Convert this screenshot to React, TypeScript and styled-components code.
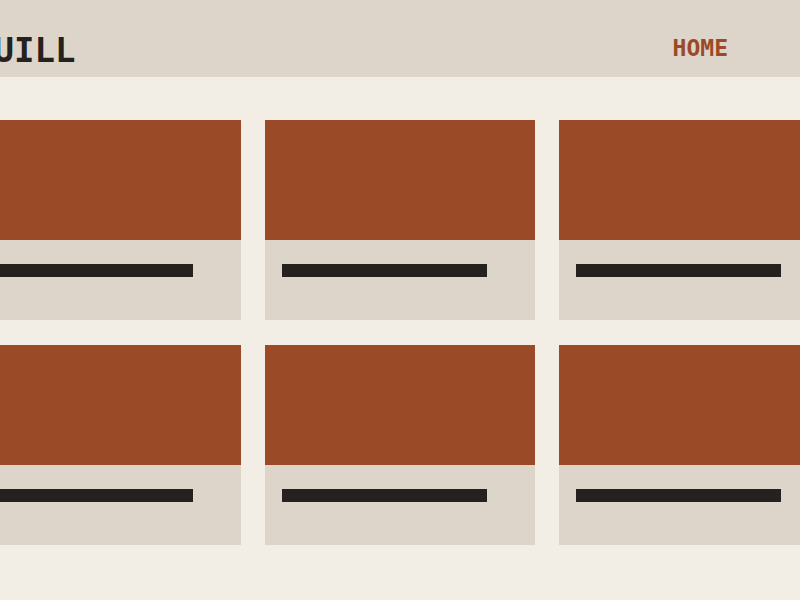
import React from "react";
import styled, { createGlobalStyle } from "styled-components";

const GlobalStyle = createGlobalStyle`
  html, body {
    margin: 0;
    padding: 0;
    background: #f2eee6;
    overflow: hidden;
  }
  body {
    font-family: "DejaVu Sans Mono", "Liberation Mono", monospace;
  }
`;

const Header = styled.header`
  height: 77px;
  background: #ddd5c9;
  display: flex;
  justify-content: center;
`;

const HeaderInner = styled.div`
  flex: 0 0 858px;
  display: flex;
  align-items: flex-start;
  justify-content: space-between;
  padding: 0 101px 0 2px;
  box-sizing: border-box;
`;

const Logo = styled.h1`
  margin: 33px 0 0;
  font-family: "DejaVu Sans Mono", monospace;
  font-size: 34px;
  font-weight: 700;
  color: #24211e;
  line-height: 1;
`;

const NavLink = styled.a`
  margin-top: 37px;
  font-family: "DejaVu Sans Mono", monospace;
  font-size: 23px;
  font-weight: 700;
  color: #9a4a27;
  text-decoration: none;
  line-height: 1;
`;

const Main = styled.main`
  display: flex;
  justify-content: center;
  padding-top: 43px;
`;

const Grid = styled.div`
  flex: 0 0 858px;
  display: grid;
  grid-template-columns: repeat(3, 270px);
  column-gap: 24px;
  row-gap: 25px;
`;

const Card = styled.article`
  display: flex;
  flex-direction: column;
  background: #ddd5c9;
`;

const Cover = styled.div`
  height: 120px;
  background: #9a4a27;
`;

const Body = styled.div`
  height: 80px;
  padding: 24px 16px 0 17px;
  box-sizing: border-box;
`;

const TitleBar = styled.div<{ $width: number }>`
  width: ${(p) => p.$width}px;
  height: 13px;
  background: #24211e;
`;

const cards = Array.from({ length: 6 }, (_, i) => i);

export default function App() {
  return (
    <>
      <GlobalStyle />
      <Header>
        <HeaderInner>
          <Logo>QUILL</Logo>
          <NavLink href="#">HOME</NavLink>
        </HeaderInner>
      </Header>
      <Main>
        <Grid>
          {cards.map((i) => (
            <Card key={i}>
              <Cover />
              <Body>
                <TitleBar $width={205} />
              </Body>
            </Card>
          ))}
        </Grid>
      </Main>
    </>
  );
}
